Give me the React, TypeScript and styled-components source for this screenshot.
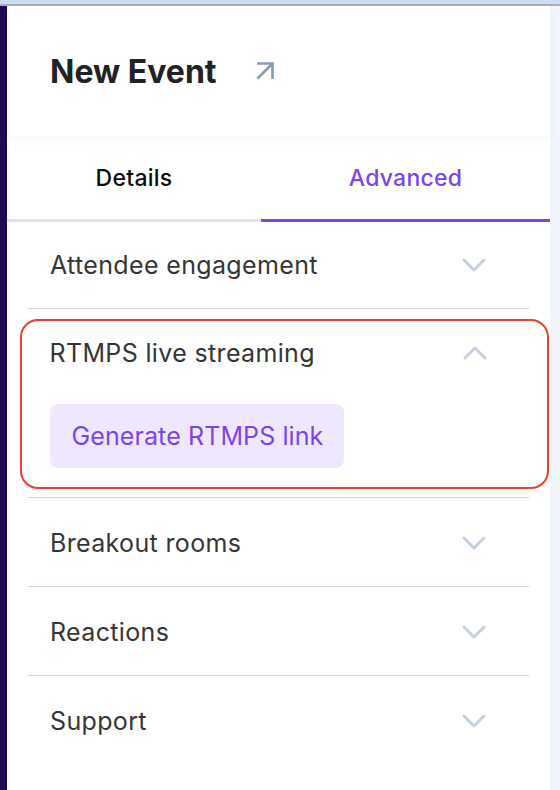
import React from "react";
import styled, { createGlobalStyle } from "styled-components";

const Global = createGlobalStyle`
  html, body { margin: 0; padding: 0; }
  body {
    background: #f1f4f9;
    font-family: Inter, "Noto Sans", "Liberation Sans", sans-serif;
    -webkit-font-smoothing: antialiased;
  }
  * { box-sizing: border-box; }
`;

const Page = styled.div`
  width: 560px;
  height: 790px;
  display: flex;
  flex-direction: column;
  overflow: hidden;
`;

const TopBar = styled.div`
  height: 6px;
  flex: none;
  background: #cddcf3;
  border-bottom: 2px solid #a6adc1;
`;

const Body = styled.div`
  flex: 1;
  display: flex;
  min-height: 0;
`;

const SideStrip = styled.div`
  width: 7px;
  flex: none;
  background: #1f0b52;
`;

const Panel = styled.div`
  width: 543px;
  flex: none;
  background: #fff;
  display: flex;
  flex-direction: column;
`;

const Gutter = styled.div`
  flex: 1;
  background: #f1f4f9;
`;

const Header = styled.header`
  height: 130px;
  flex: none;
  display: flex;
  align-items: center;
  gap: 38px;
  padding: 0 0 0 43px;
  background: #fff;
  box-shadow: 0 3px 10px rgba(0, 0, 0, 0.035);
  position: relative;
  z-index: 1;
`;

const Title = styled.h1`
  margin: 0;
  font-size: 32px;
  font-weight: 700;
  color: #222;
`;

const IconWrap = styled.span`
  display: flex;
  color: #8a9bb4;
`;

const Tabs = styled.nav`
  display: flex;
  height: 86px;
  flex: none;
`;

const Tab = styled.div<{ $active?: boolean; $w?: number }>`
  ${(p) => (p.$w ? `width: ${p.$w}px; flex: none;` : "flex: 1;")}
  display: flex;
  align-items: center;
  justify-content: center;
  font-size: 23px;
  font-weight: 500;
  letter-spacing: 0.25px;
  color: ${(p) => (p.$active ? "#7c45ec" : "#0d0d0d")};
  border-bottom: 3px solid ${(p) => (p.$active ? "#7c45ec" : "#dfe3ec")};
`;

const List = styled.div`
  padding: 0 21px;
  margin-top: -2px;
  display: flex;
  flex-direction: column;
`;

const Item = styled.section`
  border-bottom: 1px solid #c8d5e3;
  &:last-child {
    border-bottom: none;
  }
`;

const ItemHeader = styled.div`
  height: 88px;
  display: flex;
  align-items: center;
  justify-content: space-between;
  padding: 2px 35px 0 22px;
`;

const ItemTitle = styled.span`
  font-size: 25px;
  font-weight: 400;
  letter-spacing: 0.35px;
  color: #363636;
`;

const Highlight = styled.div`
  margin: 10px -20px 8px -8px;
  border: 2.5px solid #e7432b;
  border-radius: 18px;
  padding: 0 0 19px 27.5px;
`;

const HighlightHeader = styled.div`
  height: 63.5px;
  display: flex;
  align-items: center;
  justify-content: space-between;
  padding-right: 52.5px;
  margin-bottom: 19px;
`;

const Button = styled.button`
  height: 64px;
  padding: 0 21px 0 22px;
  border: none;
  border-radius: 8px;
  background: #efe7fd;
  color: #7c45ec;
  font-family: inherit;
  font-size: 25px;
  font-weight: 400;
  letter-spacing: 0.1px;
  cursor: pointer;
`;

const Chevron = ({ up }: { up?: boolean }) => (
  <svg width="40" height="40" viewBox="0 0 40 40" fill="none">
    <polyline
      points={up ? "10,25 20,15 30,25" : "10,15 20,25 30,15"}
      stroke="#c6d1df"
      strokeWidth="3"
      strokeLinecap="round"
      strokeLinejoin="round"
    />
  </svg>
);

const ArrowUpRight = () => (
  <svg width="20" height="20" viewBox="0 0 20 20" fill="none">
    <path
      d="M2.5 17.5 L17 3 M2 2.5 H17.5 V18"
      stroke="currentColor"
      strokeWidth="2.6"
      strokeLinecap="butt"
      strokeLinejoin="miter"
    />
  </svg>
);

const items = ["Breakout rooms", "Reactions", "Support"];

export default function App() {
  return (
    <Page>
      <Global />
      <TopBar />
      <Body>
        <SideStrip />
        <Panel>
          <Header>
            <Title>New Event</Title>
            <IconWrap>
              <ArrowUpRight />
            </IconWrap>
          </Header>
          <Tabs>
            <Tab $w={254}>Details</Tab>
            <Tab $active>Advanced</Tab>
          </Tabs>
          <List>
            <Item>
              <ItemHeader>
                <ItemTitle>Attendee engagement</ItemTitle>
                <Chevron />
              </ItemHeader>
            </Item>
            <Item>
              <Highlight>
                <HighlightHeader>
                  <ItemTitle>RTMPS live streaming</ItemTitle>
                  <Chevron up />
                </HighlightHeader>
                <Button>Generate RTMPS link</Button>
              </Highlight>
            </Item>
            {items.map((t) => (
              <Item key={t}>
                <ItemHeader>
                  <ItemTitle>{t}</ItemTitle>
                  <Chevron />
                </ItemHeader>
              </Item>
            ))}
          </List>
        </Panel>
        <Gutter />
      </Body>
    </Page>
  );
}
